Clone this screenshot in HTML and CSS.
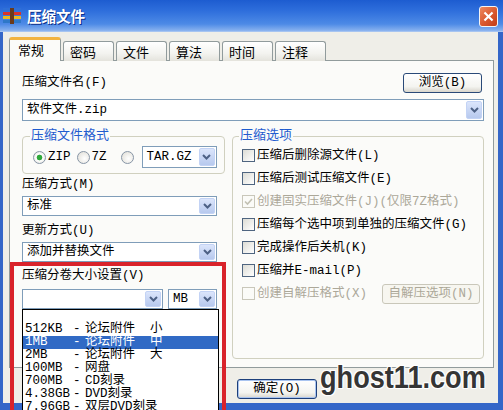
FILE: index.html
```html
<!DOCTYPE html>
<html>
    <head>
        <title>压缩文件</title>
        <link rel="stylesheet" href="styles.css">
    </head>
    <body>
        <div class="window">
            <div class="titlebar">
                <svg class="app-icon" viewBox="0 0 18 16">
                    <rect x="0" y="0" width="18" height="3" fill="#2f6fd6"/>
                    <rect x="0" y="4" width="18" height="3" fill="#d8342c"/>
                    <rect x="0" y="8" width="18" height="3" fill="#e9b821"/>
                    <rect x="0" y="12" width="18" height="3" fill="#2e78c8"/>
                    <rect x="7" y="0" width="4" height="16" fill="#6b3a1a"/>
                </svg>
                <span class="title">压缩文件</span>
                <div class="close">
                    <svg viewBox="0 0 19 21"><path d="M5 6l9 9M14 6l-9 9" stroke="#fff" stroke-width="2.4" fill="none"/></svg>
                </div>
            </div>

            <div class="dialog">
                <div class="tabs">
                    <div class="tab active">常规</div>
                    <div class="tab">密码</div>
                    <div class="tab">文件</div>
                    <div class="tab">算法</div>
                    <div class="tab">时间</div>
                    <div class="tab">注释</div>
                </div>

                <div class="panel">
                    <div class="name-row">
                        <span>压缩文件名(F)</span>
                        <div class="btn browse">浏览(B)</div>
                    </div>
                    <div class="combo file">软件文件.zip<span class="arrow"><svg viewBox="0 0 9 6"><path d="M1 1l3.5 3.5L8 1"/></svg></span></div>

                    <div class="columns">
                        <div class="col-left">
                            <fieldset class="group format">
                                <legend>压缩文件格式</legend>
                                <div class="format-row">
                                    <span class="radio on"></span><span class="opt opt-zip">ZIP</span>
                                    <span class="radio"></span><span class="opt opt-7z">7Z</span>
                                    <span class="radio"></span>
                                    <div class="combo tar">TAR.GZ<span class="arrow"><svg viewBox="0 0 9 6"><path d="M1 1l3.5 3.5L8 1"/></svg></span></div>
                                </div>
                            </fieldset>

                            <div class="label first">压缩方式(M)</div>
                            <div class="combo">标准<span class="arrow"><svg viewBox="0 0 9 6"><path d="M1 1l3.5 3.5L8 1"/></svg></span></div>

                            <div class="label">更新方式(U)</div>
                            <div class="combo">添加并替换文件<span class="arrow"><svg viewBox="0 0 9 6"><path d="M1 1l3.5 3.5L8 1"/></svg></span></div>

                            <div class="split">
                                <div class="label">压缩分卷大小设置(V)</div>
                                <div class="split-row">
                                    <div class="combo size"><span class="arrow"><svg viewBox="0 0 9 6"><path d="M1 1l3.5 3.5L8 1"/></svg></span></div>
                                    <div class="combo unit">MB<span class="arrow"><svg viewBox="0 0 9 6"><path d="M1 1l3.5 3.5L8 1"/></svg></span></div>
                                </div>
                                <div class="list">
                                    <div class="item"></div>
                                    <div class="item"><span>512KB</span><span>-</span><span>论坛附件  小</span></div>
                                    <div class="item selected"><span>1MB</span><span>-</span><span>论坛附件  中</span></div>
                                    <div class="item"><span>2MB</span><span>-</span><span>论坛附件  大</span></div>
                                    <div class="item"><span>100MB</span><span>-</span><span>网盘</span></div>
                                    <div class="item"><span>700MB</span><span>-</span><span>CD刻录</span></div>
                                    <div class="item"><span>4.38GB</span><span>-</span><span>DVD刻录</span></div>
                                    <div class="item"><span>7.96GB</span><span>-</span><span>双层DVD刻录</span></div>
                                </div>
                            </div>
                        </div>

                        <fieldset class="group options">
                            <legend>压缩选项</legend>
                            <div class="check-row"><span class="check"></span>压缩后删除源文件(L)</div>
                            <div class="check-row"><span class="check"></span>压缩后测试压缩文件(E)</div>
                            <div class="check-row disabled"><span class="check"><svg viewBox="0 0 11 11"><path d="M2 5.5l2.5 2.5L9 3"/></svg></span>创建固实压缩文件(J)(仅限7Z格式)</div>
                            <div class="check-row"><span class="check"></span>压缩每个选中项到单独的压缩文件(G)</div>
                            <div class="check-row"><span class="check"></span>完成操作后关机(K)</div>
                            <div class="check-row"><span class="check"></span>压缩并E-mail(P)</div>
                            <div class="check-row disabled"><span class="check"></span>创建自解压格式(X)<div class="btn sfx">自解压选项(N)</div></div>
                        </fieldset>
                    </div>
                </div>

                <div class="footer">
                    <div class="btn ok">确定(O)</div>
                </div>
            </div>

            <div class="watermark">ghost11.com</div>
        </div>
    </body>
</html>
```

FILE: styles.css
```css
html, body{
    margin: 0;
    height: 100%;
    overflow: hidden;
}

body{
    background-color: #ffffff;
    color: #000000;
    font-family: "Liberation Mono", "Noto Sans CJK SC", monospace;
    font-size: 12.5px;
    line-height: 14px;
}

.window{
    width: 503px;
    height: 410px;
    display: flex;
    flex-direction: column;
    position: relative;
}

/* title bar */

.titlebar{
    height: 32px;
    flex: none;
    display: flex;
    align-items: center;
    padding: 0 5px 0 3px;
    background: linear-gradient(#1d5cd0, #2f6fdc 35%, #4d8ae6 75%, #86b0ee 95%, #b5cdf2);
}

.app-icon{
    width: 18px;
    height: 16px;
    margin-right: 6px;
}

.title{
    color: white;
    font-family: "Noto Sans CJK SC", sans-serif;
    font-weight: bold;
    font-size: 14.5px;
    text-shadow: 1px 1px #0c2f8a;
}

.close{
    margin-left: auto;
    width: 19px;
    height: 21px;
    box-sizing: border-box;
    border: 1px solid #f4f4f4;
    border-radius: 3px;
    background: linear-gradient(135deg, #ee8a60, #d9572d 55%, #c23c16);
}

.close svg{
    display: block;
    width: 17px;
    height: 19px;
}

/* dialog body */

.dialog{
    flex: 1;
    display: flex;
    flex-direction: column;
    background-color: #efeee8;
    border: solid #3466c8;
    border-width: 0 5px 7px 3px;
    padding: 5px 4px 0 6px;
}

.tabs{
    display: flex;
    align-items: flex-end;
    gap: 2px;
    margin-bottom: -1px;
    position: relative;
    z-index: 1;
}

.tab{
    height: 20px;
    box-sizing: border-box;
    padding: 0 17px 0 6px;
    border: 1px solid #919b9c;
    border-bottom: none;
    border-radius: 3px 3px 0 0;
    background: linear-gradient(#ffffff, #f3f3ef 60%, #e4e3dc);
    font-family: "Noto Sans CJK SC", sans-serif;
    font-size: 13px;
    line-height: 20px;
}

.tab.active{
    height: 24px;
    padding: 0 16px 0 8px;
    border-top: 3px solid #f2b340;
    background: #fbfbf9;
    line-height: 19px;
}

.panel{
    height: 308px;
    flex: none;
    box-sizing: border-box;
    border: 1px solid #919b9c;
    background-color: #fbfbf9;
    padding: 12px 9px 0 12px;
}

.name-row{
    display: flex;
    align-items: center;
    justify-content: space-between;
    height: 20px;
}

/* buttons */

.btn{
    height: 20px;
    box-sizing: border-box;
    border: 1px solid #2a4a78;
    border-radius: 3px;
    background: linear-gradient(#ffffff, #f4f4f0 70%, #d8d5cc);
    text-align: center;
    line-height: 18px;
}

.browse{
    width: 79px;
    margin-right: 2px;
}

.ok{
    width: 80px;
    border-color: #1d3f7a;
    box-shadow: inset 0 0 0 1px #a9c4f0;
}

.sfx{
    width: 98px;
    margin-left: auto;
    border-color: #c9c7ba;
    background: #f7f6f0;
    color: #aca899;
}

/* combo boxes */

.combo{
    display: flex;
    align-items: center;
    height: 20px;
    width: 195px;
    box-sizing: border-box;
    border: 1px solid #7f9db9;
    background-color: white;
    padding-left: 4px;
    white-space: nowrap;
}

.combo.file{
    width: auto;
    height: 22px;
    margin-top: 6px;
}

.arrow{
    margin-left: auto;
    width: 16px;
    height: calc(100% - 2px);
    margin-right: 1px;
    box-sizing: border-box;
    border: 1px solid #c3d3f5;
    border-radius: 2px;
    background: linear-gradient(#dbe5fb, #b7c9ee);
    display: flex;
    align-items: center;
    justify-content: center;
}

.arrow svg{
    width: 9px;
    height: 6px;
}

.arrow path{
    fill: none;
    stroke: #4d6185;
    stroke-width: 2;
}

/* group boxes */

.columns{
    display: flex;
    align-items: flex-start;
    gap: 7px;
    margin-top: 8px;
}

.col-left{
    width: 203px;
    flex: none;
}

.group{
    margin: 0;
    min-width: 0;
    border: 1px solid #d0d0bf;
    border-radius: 4px;
}

.group legend{
    padding: 0 1px;
    margin-left: -3px;
    color: #1f5ccf;
    font-size: 13px;
    line-height: 14px;
}

.format{
    padding: 3px 7px 5px 10px;
}

.format-row{
    display: flex;
    align-items: center;
    height: 22px;
}

.radio{
    width: 13px;
    height: 13px;
    box-sizing: border-box;
    border: 1px solid #8795a6;
    border-radius: 50%;
    background: radial-gradient(circle at 60% 60%, #ffffff, #dedcd4);
    flex: none;
}

.radio.on{
    background: radial-gradient(circle, #2fa83a 0 2.5px, #ffffff 3.2px, #dedcd4);
}

.opt{
    margin-left: 2px;
}

.opt-zip{
    margin-right: 6px;
}

.opt-7z{
    margin-right: 14px;
}

.combo.tar{
    width: 75px;
    height: 22px;
    margin-left: 8px;
}

.label{
    margin: 8px 0 4px;
}

.label.first{
    margin-top: 4px;
}

/* split volume section, framed in red */

.split{
    margin: 0 -1px 0 -12px;
    border: 4px solid #d9232b;
    padding: 3px 3px 0 8px;
    height: 170px;
}

.split .label{
    margin: 0 0 6px;
}

.split-row{
    display: flex;
}

.combo.size{
    width: 141px;
}

.combo.unit{
    width: 49px;
    margin-left: 5px;
}

.list{
    border: 1px solid #000000;
    background-color: white;
}

.item{
    display: grid;
    grid-template-columns: 48px 12px auto;
    height: 13px;
    line-height: 13px;
    padding-left: 2px;
    white-space: pre;
}

.item.selected{
    background-color: #316ac5;
    color: white;
}

/* options */

.options{
    flex: 1;
    height: 230px;
    box-sizing: border-box;
    padding: 1px 3px 0 9px;
}

.check-row{
    display: flex;
    align-items: center;
    height: 23px;
    white-space: nowrap;
}

.check{
    width: 13px;
    height: 13px;
    flex: none;
    box-sizing: border-box;
    border: 1px solid #4f6580;
    background: linear-gradient(135deg, #dcdcd5, #ffffff);
    margin-right: 2px;
}

.check svg{
    display: block;
    width: 11px;
    height: 11px;
}

.check path{
    fill: none;
    stroke: #c2c0b2;
    stroke-width: 1.6;
}

.check-row.disabled{
    color: #aca899;
}

.check-row.disabled .check{
    border-color: #c9c7ba;
    background: #fbfbf8;
}

/* bottom */

.footer{
    flex: 1;
    padding: 11px 0 0 228px;
}

.watermark{
    position: absolute;
    left: 320px;
    top: 362px;
    font-family: "Liberation Sans", sans-serif;
    font-weight: bold;
    font-size: 31px;
    line-height: 1;
    color: #353535;
    transform: scaleX(0.875);
    transform-origin: left top;
    text-shadow: 1px 1px 0 #fff, -1px -1px 0 #fff, 1px -1px 0 #fff, -1px 1px 0 #fff, 0 0 3px #fff;
}
```
